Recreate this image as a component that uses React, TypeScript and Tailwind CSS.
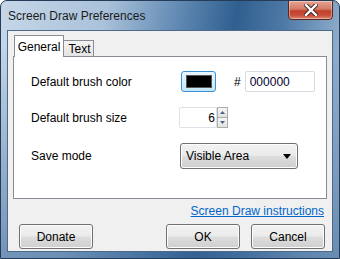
import React from "react";

const font = { fontFamily: '"Liberation Sans", Arial, sans-serif' };

function TitleBar() {
  return (
    <div className="relative flex h-[29px] items-center pl-[7px]">
      <span className="text-[12px] text-[#1b1b1b]">Screen Draw Preferences</span>
      {/* close button */}
      <div className="absolute right-[6px] top-[-1px] flex h-[20px] w-[45px] items-center justify-center rounded-b-[4px] border border-[#5a2a22] bg-[linear-gradient(180deg,#e5a493_0%,#d37a66_45%,#c2402c_55%,#c8503a_80%,#dc8a70_100%)] shadow-[inset_0_0_0_1px_rgba(255,255,255,0.35)]">
        <svg width="14" height="12" viewBox="0 0 14 12">
          <path
            d="M2 1 L12 11 M12 1 L2 11"
            stroke="#3b2320"
            strokeWidth="4.2"
            strokeLinecap="square"
          />
          <path
            d="M2 1 L12 11 M12 1 L2 11"
            stroke="#ffffff"
            strokeWidth="2.4"
            strokeLinecap="square"
          />
        </svg>
      </div>
    </div>
  );
}

function Tabs() {
  return (
    <div className="flex h-[21px] items-end pl-[6px]">
      <div className="relative z-10 flex h-[22px] w-[50px] items-start justify-center border border-b-0 border-[#898c95] bg-white pt-[2px] text-[12px]">
        General
      </div>
      <div className="ml-[-1px] flex h-[17px] w-[31px] items-center justify-center border border-b-0 border-[#898c95] bg-[linear-gradient(180deg,#f3f3f3,#e3e3e3)] pl-[2px] text-[12px]">
        Text
      </div>
    </div>
  );
}

function Row({ label, children, h }: { label: string; children: React.ReactNode; h: string }) {
  return (
    <div className={`flex items-center ${h}`}>
      <span className="w-[148px] text-[12px]">{label}</span>
      {children}
    </div>
  );
}

function Button({ label, w = "w-[74px]" }: { label: string; w?: string }) {
  return (
    <div
      className={`flex h-[25px] ${w} items-center justify-center rounded-[3px] border border-[#707070] bg-[linear-gradient(180deg,#f2f2f2_0%,#ebebeb_48%,#dddddd_52%,#cfcfcf_100%)] text-[12px] shadow-[inset_0_0_0_1px_#fcfcfc]`}
    >
      {label}
    </div>
  );
}

export default function App() {
  return (
    <div
      style={font}
      className="flex h-[259px] w-[340px] flex-col overflow-hidden rounded-t-[7px] border border-[#243c58] bg-[linear-gradient(180deg,rgba(60,105,155,0)_0%,rgba(60,105,155,0)_18%,rgba(55,100,150,0.55)_100%),linear-gradient(100deg,#c6d7e8_0%,#a9c1da_28%,#5d86b0_48%,#2f5f90_62%,#4f7aa6_75%,#8eaccb_90%,#a5bed8_100%)] text-black"
    >
      <TitleBar />
      <div className="mx-[6px] mb-[6px] flex flex-1 flex-col border border-[#4d6a8a] bg-[#f0f0f0]">
        <div className="pt-[5px]">
          <Tabs />
        </div>
        {/* tab panel */}
        <div className="mx-[5px] mt-[-1px] flex h-[143px] flex-col gap-[15px] border border-[#898c95] bg-white pl-[17px] pt-[14px]">
          <Row label="Default brush color" h="h-[21px]">
            <div className="ml-[2px] flex h-[21px] w-[35px] items-center justify-center rounded-[3px] border border-[#3c8fd0] bg-[linear-gradient(180deg,#eaf6fd,#c4e5f6)]">
              <div className="h-[13px] w-[26px] border border-[#555] bg-black" />
            </div>
            <span className="ml-[18px] text-[12px]">#</span>
            <div className="ml-[4px] flex h-[21px] w-[70px] items-center rounded-[2px] border border-[#d5dbe3] bg-white pl-[4px] text-[12px] text-[#000033]">
              000000
            </div>
          </Row>
          <Row label="Default brush size" h="h-[21px]">
            <div className="flex h-[21px] items-stretch">
              <div className="flex w-[38px] items-center justify-end rounded-l-[2px] border border-[#dde2e8] bg-white pr-[1px] text-[12px]">
                6
              </div>
              <div className="flex w-[11px] flex-col border border-[#acacac]">
                <div className="flex flex-1 items-center justify-center border-b border-[#acacac] bg-[linear-gradient(180deg,#f6f6f6,#e2e2e2)]">
                  <svg width="5" height="3" viewBox="0 0 5 3">
                    <path d="M0 3 L2.5 0 L5 3 Z" fill="#4d6185" />
                  </svg>
                </div>
                <div className="flex flex-1 items-center justify-center bg-[linear-gradient(180deg,#f6f6f6,#e2e2e2)]">
                  <svg width="5" height="3" viewBox="0 0 5 3">
                    <path d="M0 0 L2.5 3 L5 0 Z" fill="#4d6185" />
                  </svg>
                </div>
              </div>
            </div>
          </Row>
          <Row label="Save mode" h="h-[26px]">
            <div className="ml-[1px] flex h-[26px] w-[118px] items-center justify-between rounded-[3px] border border-[#707070] bg-[linear-gradient(180deg,#f2f2f2_0%,#ebebeb_48%,#dddddd_52%,#cfcfcf_100%)] pl-[5px] pr-[6px] text-[12px] shadow-[inset_0_0_0_1px_#fcfcfc]">
              <span>Visible Area</span>
              <svg width="8" height="5" viewBox="0 0 8 5">
                <path d="M0 0 L8 0 L4 5 Z" fill="#000" />
              </svg>
            </div>
          </Row>
        </div>
        <div className="flex justify-end pr-[8px] pt-[5px]">
          <span className="text-[12px] leading-[14px] text-[#0066cc] underline">
            Screen Draw instructions
          </span>
        </div>
        <div className="flex items-center pl-[11px] pr-[7px] pt-[6px]">
          <Button label="Donate" w="w-[74px]" />
          <div className="flex-1" />
          <Button label="OK" />
          <div className="w-[11px]" />
          <Button label="Cancel" />
        </div>
      </div>
    </div>
  );
}
